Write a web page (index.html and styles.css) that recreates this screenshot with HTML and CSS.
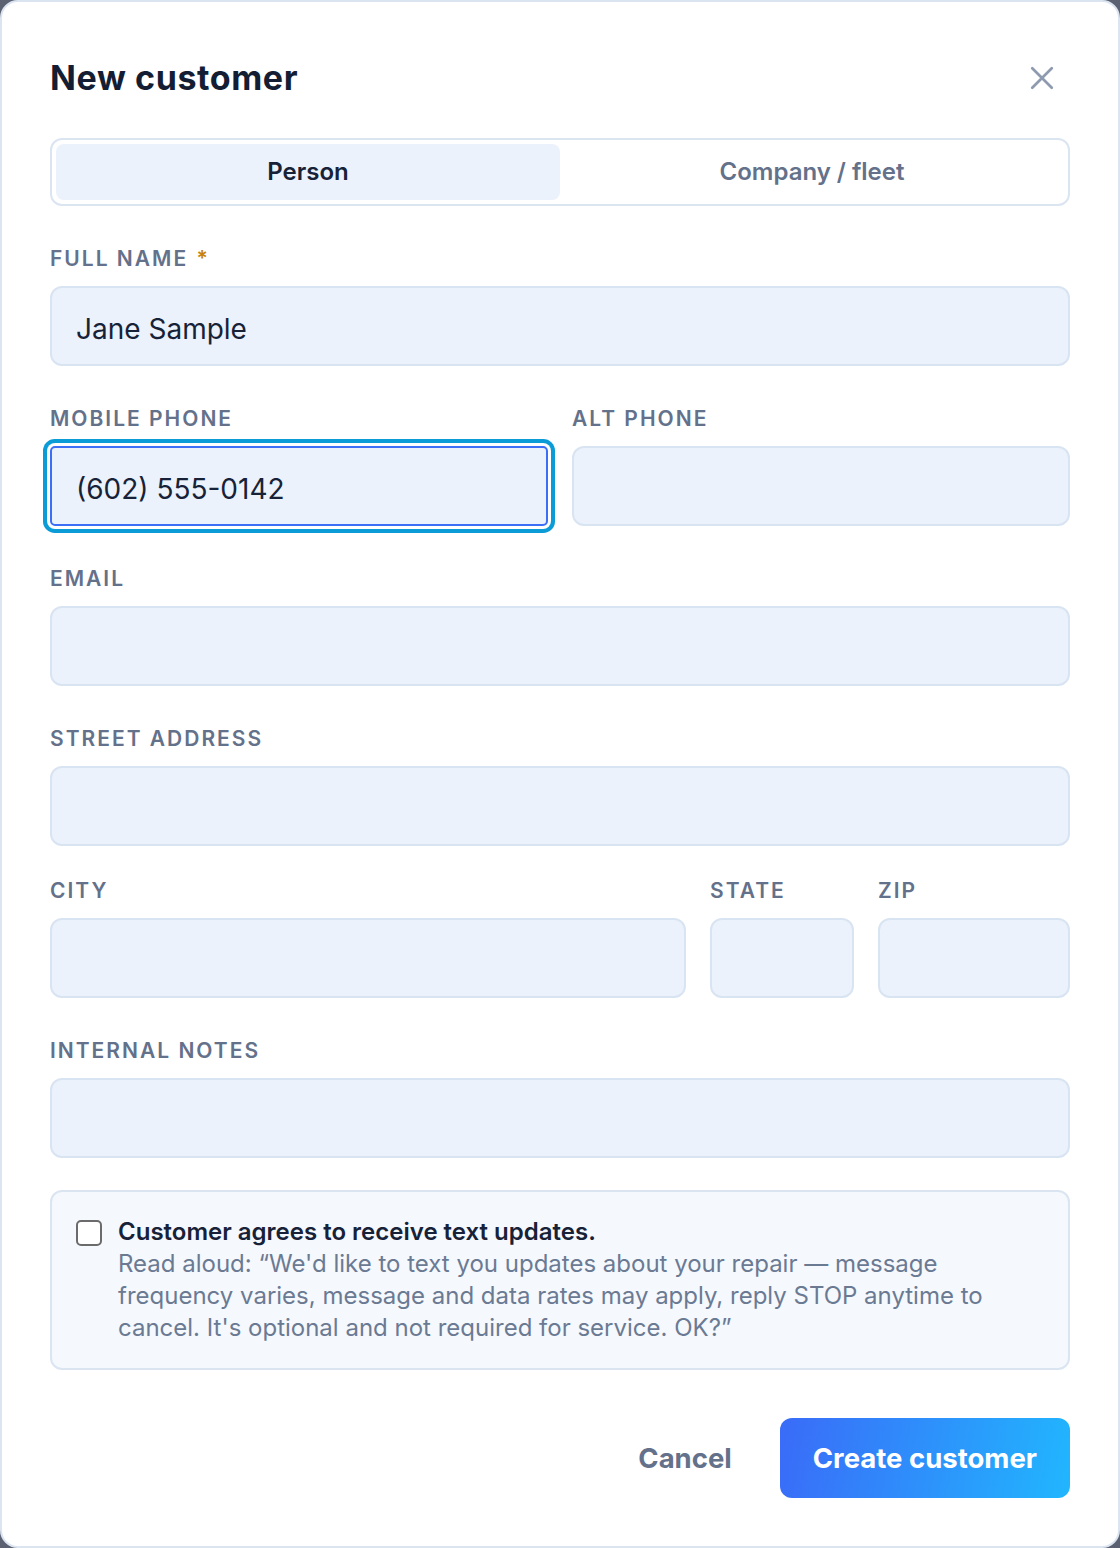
FILE: index.html
```html
<html>
	<head>
		<link rel="stylesheet" href="styles.css">
	</head>
	<body>
		<div class="modal">
  <div class="modal-header">
    <h1 class="modal-title">New customer</h1>
    <button class="close-btn" type="button">
      <svg width="26" height="26" viewBox="0 0 24 24" fill="none" stroke="currentColor" stroke-width="2.5" stroke-linecap="round">
        <path d="M3 3L21 21M21 3L3 21" />
      </svg>
    </button>
  </div>

  <div class="segmented">
    <span class="segment active">Person</span>
    <span class="segment">Company / fleet</span>
  </div>

  <div class="field">
    <label class="label">Full name <span class="req">*</span></label>
    <div class="input">Jane Sample</div>
  </div>

  <div class="field row two">
    <div>
      <label class="label">Mobile phone</label>
      <div class="input focused">(602) 555-0142</div>
    </div>
    <div>
      <label class="label">Alt phone</label>
      <div class="input"></div>
    </div>
  </div>

  <div class="field">
    <label class="label">Email</label>
    <div class="input"></div>
  </div>

  <div class="field">
    <label class="label">Street address</label>
    <div class="input"></div>
  </div>

  <div class="field row city">
    <div>
      <label class="label">City</label>
      <div class="input"></div>
    </div>
    <div>
      <label class="label">State</label>
      <div class="input"></div>
    </div>
    <div>
      <label class="label">Zip</label>
      <div class="input"></div>
    </div>
  </div>

  <div class="field">
    <label class="label">Internal notes</label>
    <div class="input"></div>
  </div>

  <div class="consent">
    <span class="checkbox"></span>
    <div class="consent-text">
      <strong>Customer agrees to receive text updates.</strong>
      <p>Read aloud: “We'd like to text you updates about your repair — message frequency varies, message and data rates may apply, reply STOP anytime to cancel. It's optional and not required for service. OK?”</p>
    </div>
  </div>

  <div class="actions">
    <button class="btn-cancel" type="button">Cancel</button>
    <button class="btn-primary" type="button">Create customer</button>
  </div>
</div>
	</body>

</html>
```

FILE: styles.css
```css
* {
  box-sizing: border-box;
}

body {
  margin: 0;
  background: #5b6170;
  font-family: Inter, "Noto Sans", sans-serif;
  color: #172238;
}

.modal {
  width: 1120px;
  height: 1548px;
  padding: 56px 48px 48px;
  background: #fff;
  border: 2px solid #dbe5f2;
  border-radius: 18px;
}

.modal-header {
  display: flex;
  align-items: center;
  justify-content: space-between;
  height: 40px;
  margin-bottom: 40px;
}

.modal-title {
  margin: 0;
  font-size: 34px;
  font-weight: 700;
  letter-spacing: 0.6px;
  line-height: 40px;
  color: #131d33;
}

.close-btn {
  display: flex;
  align-items: center;
  justify-content: center;
  width: 40px;
  height: 40px;
  margin-right: 8px;
  padding: 0;
  border: none;
  background: none;
  color: #8e9ab0;
  cursor: pointer;
}

/* person / company toggle */
.segmented {
  display: flex;
  padding: 4px;
  border: 2px solid #dbe5f2;
  border-radius: 12px;
}

.segment {
  flex: 1;
  height: 56px;
  line-height: 56px;
  text-align: center;
  font-size: 24px;
  font-weight: 600;
  color: #64718a;
  border-radius: 8px;
}

.segment.active {
  background: #ebf2fb;
  color: #172238;
}

.field {
  margin-top: 40px;
}

.field.city {
  margin-top: 32px;
}

.row {
  display: grid;
  gap: 24px;
}

.row.two {
  grid-template-columns: 1fr 1fr;
}

.row.city {
  grid-template-columns: 1fr 144px 192px;
}

.label {
  display: block;
  margin-bottom: 16px;
  padding-top: 1px;
  height: 24px;
  font-size: 21px;
  font-weight: 600;
  line-height: 24px;
  letter-spacing: 2px;
  text-transform: uppercase;
  color: #64718a;
}

.req {
  margin-left: 1px;
  color: #c7820a;
}

.input {
  height: 80px;
  padding: 3px 24px 0;
  background: #ebf2fb;
  border: 2px solid #d9e4f2;
  border-radius: 12px;
  font-size: 28px;
  line-height: 76px;
  color: #172238;
}

.input.focused {
  border-color: #3d6ef6;
  border-radius: 5px;
  box-shadow: 0 0 0 3px #fff, 0 0 0 7px #0b9bd6;
}

/* sms consent */
.consent {
  display: flex;
  gap: 16px;
  margin-top: 32px;
  padding: 24px;
  background: #f5f8fd;
  border: 2px solid #dbe5f2;
  border-radius: 12px;
}

.checkbox {
  flex: none;
  width: 26px;
  height: 26px;
  margin-top: 4px;
  border: 2px solid #6b6b6b;
  border-radius: 5px;
  background: #fff;
}

.consent-text {
  font-size: 24px;
  line-height: 32px;
}

.consent-text strong {
  display: block;
  font-weight: 600;
  color: #172238;
}

.consent-text p {
  margin: 0;
  color: #6b7a93;
}

.actions {
  display: flex;
  justify-content: flex-end;
  align-items: center;
  gap: 16px;
  margin-top: 48px;
}

.btn-cancel,
.btn-primary {
  height: 80px;
  border: none;
  font-family: inherit;
  font-size: 27.5px;
  font-weight: 700;
  cursor: pointer;
}

.btn-cancel {
  padding: 0 32px;
  background: none;
  color: #64718a;
}

.btn-primary {
  padding: 0 33px;
  border-radius: 12px;
  color: #fff;
  background: linear-gradient(100deg, #3a6bf8, #21b6fe);
}
```
